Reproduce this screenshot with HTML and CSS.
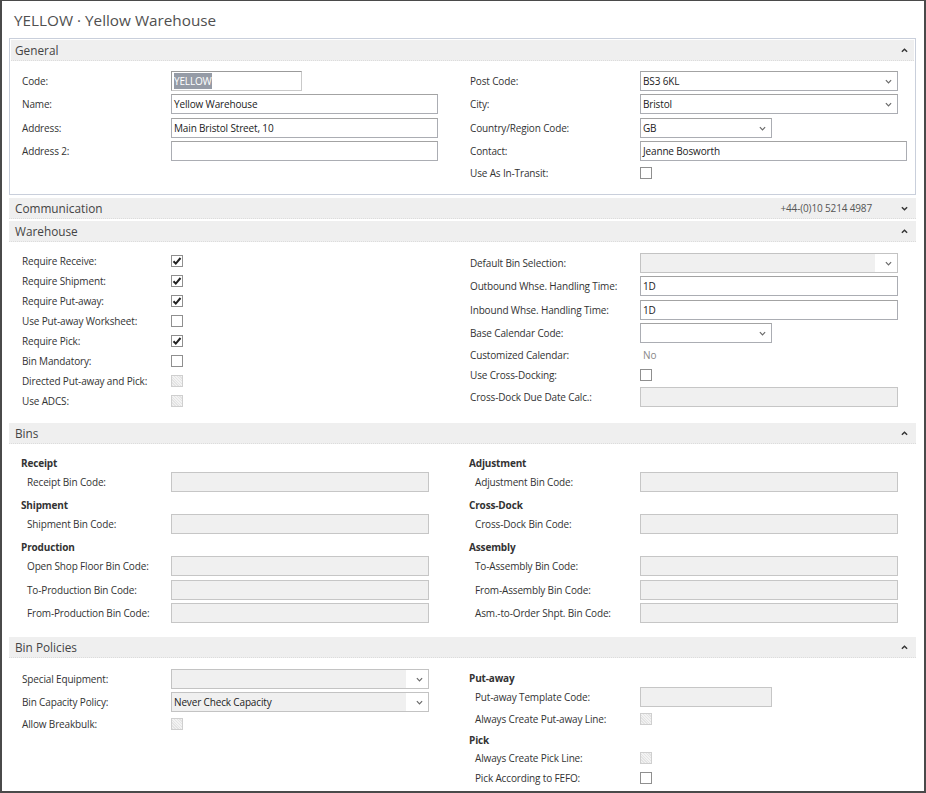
FILE: index.html
```html
<!DOCTYPE html>
<html>
<head>
<meta charset="utf-8">
<link rel="stylesheet" href="styles.css">
</head>
<body>
<div class="window">
  <h1 class="title">YELLOW · Yellow Warehouse</h1>
  <div class="tabs">

    <section class="tab boxed">
      <div class="tab-head"><span class="tab-name">General</span><svg class="chev" viewBox="0 0 8 5"><polyline points="1,4 4,1 7,4"/></svg></div>
      <div class="tab-body">
        <div class="col left">
          <div class="row"><span class="lbl">Code:</span><div class="field w131 code"><span class="sel">YELLOW</span></div></div>
          <div class="row"><span class="lbl">Name:</span><div class="field w267">Yellow Warehouse</div></div>
          <div class="row"><span class="lbl">Address:</span><div class="field w267">Main Bristol Street, 10</div></div>
          <div class="row"><span class="lbl">Address 2:</span><div class="field w267"></div></div>
        </div>
        <div class="col right">
          <div class="row"><span class="lbl">Post Code:</span><div class="field w258 dd">BS3 6KL<svg class="ddc" viewBox="0 0 8 5"><polyline points="1,1 4,4 7,1"/></svg></div></div>
          <div class="row"><span class="lbl">City:</span><div class="field w258 dd">Bristol<svg class="ddc" viewBox="0 0 8 5"><polyline points="1,1 4,4 7,1"/></svg></div></div>
          <div class="row"><span class="lbl">Country/Region Code:</span><div class="field w132 dd">GB<svg class="ddc" viewBox="0 0 8 5"><polyline points="1,1 4,4 7,1"/></svg></div></div>
          <div class="row"><span class="lbl">Contact:</span><div class="field w267">Jeanne Bosworth</div></div>
          <div class="row cbrow"><span class="lbl">Use As In-Transit:</span><span class="cb"></span></div>
        </div>
      </div>
    </section>

    <section class="tab collapsed">
      <div class="tab-head"><span class="tab-name">Communication</span><span class="summary">+44-(0)10 5214 4987</span><svg class="chev" viewBox="0 0 8 5"><polyline points="1,1 4,4 7,1"/></svg></div>
    </section>

    <section class="tab">
      <div class="tab-head"><span class="tab-name">Warehouse</span><svg class="chev" viewBox="0 0 8 5"><polyline points="1,4 4,1 7,4"/></svg></div>
      <div class="tab-body">
        <div class="col left">
          <div class="row cbrow"><span class="lbl">Require Receive:</span><span class="cb on"><svg viewBox="0 0 10 10"><path d="M1.5 5.2 L3.8 7.6 L8.5 2"/></svg></span></div>
          <div class="row cbrow"><span class="lbl">Require Shipment:</span><span class="cb on"><svg viewBox="0 0 10 10"><path d="M1.5 5.2 L3.8 7.6 L8.5 2"/></svg></span></div>
          <div class="row cbrow"><span class="lbl">Require Put-away:</span><span class="cb on"><svg viewBox="0 0 10 10"><path d="M1.5 5.2 L3.8 7.6 L8.5 2"/></svg></span></div>
          <div class="row cbrow"><span class="lbl">Use Put-away Worksheet:</span><span class="cb"></span></div>
          <div class="row cbrow"><span class="lbl">Require Pick:</span><span class="cb on"><svg viewBox="0 0 10 10"><path d="M1.5 5.2 L3.8 7.6 L8.5 2"/></svg></span></div>
          <div class="row cbrow"><span class="lbl">Bin Mandatory:</span><span class="cb"></span></div>
          <div class="row cbrow"><span class="lbl">Directed Put-away and Pick:</span><span class="cb off"></span></div>
          <div class="row cbrow"><span class="lbl">Use ADCS:</span><span class="cb off"></span></div>
        </div>
        <div class="col right">
          <div class="row"><span class="lbl">Default Bin Selection:</span><div class="field w258 dd grey">&nbsp;<svg class="ddc" viewBox="0 0 8 5"><polyline points="1,1 4,4 7,1"/></svg></div></div>
          <div class="row"><span class="lbl">Outbound Whse. Handling Time:</span><div class="field w258">1D</div></div>
          <div class="row"><span class="lbl">Inbound Whse. Handling Time:</span><div class="field w258">1D</div></div>
          <div class="row"><span class="lbl">Base Calendar Code:</span><div class="field w132 dd">&nbsp;<svg class="ddc" viewBox="0 0 8 5"><polyline points="1,1 4,4 7,1"/></svg></div></div>
          <div class="row cbrow"><span class="lbl">Customized Calendar:</span><span class="ro">No</span></div>
          <div class="row cbrow"><span class="lbl">Use Cross-Docking:</span><span class="cb"></span></div>
          <div class="row"><span class="lbl">Cross-Dock Due Date Calc.:</span><div class="field w258 disabled"></div></div>
        </div>
      </div>
    </section>

    <section class="tab grouped">
      <div class="tab-head"><span class="tab-name">Bins</span><svg class="chev" viewBox="0 0 8 5"><polyline points="1,4 4,1 7,4"/></svg></div>
      <div class="tab-body">
        <div class="col left">
          <div class="group">Receipt</div>
          <div class="row sub"><span class="lbl">Receipt Bin Code:</span><div class="field w258 disabled"></div></div>
          <div class="group">Shipment</div>
          <div class="row sub"><span class="lbl">Shipment Bin Code:</span><div class="field w258 disabled"></div></div>
          <div class="group">Production</div>
          <div class="row sub"><span class="lbl">Open Shop Floor Bin Code:</span><div class="field w258 disabled"></div></div>
          <div class="row sub"><span class="lbl">To-Production Bin Code:</span><div class="field w258 disabled"></div></div>
          <div class="row sub"><span class="lbl">From-Production Bin Code:</span><div class="field w258 disabled"></div></div>
        </div>
        <div class="col right">
          <div class="group">Adjustment</div>
          <div class="row sub"><span class="lbl">Adjustment Bin Code:</span><div class="field w258 disabled"></div></div>
          <div class="group">Cross-Dock</div>
          <div class="row sub"><span class="lbl">Cross-Dock Bin Code:</span><div class="field w258 disabled"></div></div>
          <div class="group">Assembly</div>
          <div class="row sub"><span class="lbl">To-Assembly Bin Code:</span><div class="field w258 disabled"></div></div>
          <div class="row sub"><span class="lbl">From-Assembly Bin Code:</span><div class="field w258 disabled"></div></div>
          <div class="row sub"><span class="lbl">Asm.-to-Order Shpt. Bin Code:</span><div class="field w258 disabled"></div></div>
        </div>
      </div>
    </section>

    <section class="tab">
      <div class="tab-head"><span class="tab-name">Bin Policies</span><svg class="chev" viewBox="0 0 8 5"><polyline points="1,4 4,1 7,4"/></svg></div>
      <div class="tab-body">
        <div class="col left">
          <div class="row"><span class="lbl">Special Equipment:</span><div class="field w258 dd grey">&nbsp;<svg class="ddc" viewBox="0 0 8 5"><polyline points="1,1 4,4 7,1"/></svg></div></div>
          <div class="row"><span class="lbl">Bin Capacity Policy:</span><div class="field w258 dd grey">Never Check Capacity<svg class="ddc" viewBox="0 0 8 5"><polyline points="1,1 4,4 7,1"/></svg></div></div>
          <div class="row cbrow"><span class="lbl">Allow Breakbulk:</span><span class="cb off"></span></div>
        </div>
        <div class="col right">
          <div class="group">Put-away</div>
          <div class="row sub"><span class="lbl">Put-away Template Code:</span><div class="field w132 disabled"></div></div>
          <div class="row sub cbrow"><span class="lbl">Always Create Put-away Line:</span><span class="cb off"></span></div>
          <div class="group">Pick</div>
          <div class="row sub cbrow"><span class="lbl">Always Create Pick Line:</span><span class="cb off"></span></div>
          <div class="row sub cbrow"><span class="lbl">Pick According to FEFO:</span><span class="cb"></span></div>
        </div>
      </div>
    </section>

  </div>
</div>
</body>
</html>
```
FILE: styles.css
```css
* { box-sizing: border-box; }
html, body { margin: 0; padding: 0; background: #fff; }
body {
  font-family: "Open Sans", "Noto Sans", sans-serif;
  font-size: 10px;
  letter-spacing: -0.15px;
  color: #333;
}
.window {
  width: 926px;
  height: 793px;
  border-top: 1px solid #4a4a4a;
  border-left: 2px solid #4a4a4a;
  border-right: 2px solid #4a4a4a;
  border-bottom: 2px solid #4a4a4a;
  overflow: hidden;
}
.title {
  margin: 0;
  height: 37px;
  padding: 8px 0 0 12px;
  font-size: 15.3px;
  font-weight: normal;
  letter-spacing: 0;
  color: #505050;
  line-height: 22px;
}
.tabs {
  margin: 0 8px 0 7px;
  display: flex;
  flex-direction: column;
}
.tab.boxed {
  border: 1px solid #c9cfdb;
  padding: 1px;
  margin-bottom: 3px;
}
.tab.collapsed { margin-bottom: 2px; }
.tab-head {
  height: 21px;
  background: #efefef;
  border-bottom: 1px dotted #dcdcdc;
  display: flex;
  align-items: center;
  padding: 0 8px 0 6px;
  color: #444;
  font-size: 11.8px;
  letter-spacing: 0;
}
.boxed .tab-head { padding-left: 4px; padding-right: 6px; }
.tab-name { flex: 1; }
.summary {
  font-size: 10px;
  letter-spacing: -0.15px;
  color: #555;
  margin-right: 29px;
}
.chev {
  width: 7px;
  height: 5px;
  fill: none;
  stroke: #333;
  stroke-width: 1.6;
}
.tab-body {
  display: grid;
  grid-template-columns: 448px 1fr;
  padding: 9px 0 12px 13px;
}
.grouped .tab-body { padding-top: 8px; }
.boxed .tab-body { padding: 8px 0 10px 11px; }
.col { display: flex; flex-direction: column; }
.row {
  height: 23.5px;
  display: flex;
  align-items: center;
}
.row.cbrow { height: 20px; }
.lbl {
  flex: none;
  white-space: nowrap;
}
.left .lbl { width: 149px; }
.right .lbl { width: 170px; }
.row.sub .lbl { padding-left: 5px; }
.group {
  margin-top: 4px;
  height: 14.5px;
  line-height: 14.5px;
  font-weight: bold;
  color: #333;
  margin-left: -1px;
}
.field {
  position: relative;
  height: 20px;
  border: 1px solid #abadb3;
  border-top-color: #a3a3a3;
  background: #fff;
  color: #222;
  padding: 0 2px;
  line-height: 18px;
  white-space: nowrap;
  overflow: hidden;
}
.w131 { width: 131px; }
.w132 { width: 132px; }
.w258 { width: 258px; }
.w267 { width: 267px; }
.field.code { border-color: #9b9b9b #c9c9c9 #c9c9c9 #9b9b9b; }
.sel {
  background: #959ba6;
  color: #fff;
  padding: 1px 0;
}
.field.disabled {
  background: #f0f0f0;
  border-color: #c6c6c6;
}
.field.dd { padding-right: 20px; }
.field.grey {
  background: linear-gradient(to right, #f0f0f0 calc(100% - 22px), #fff calc(100% - 22px));
  border-color: #c3c3c3;
}
.ddc {
  position: absolute;
  right: 5px;
  top: 7px;
  width: 7px;
  height: 5px;
  fill: none;
  stroke: #6b6b6b;
  stroke-width: 1.4;
}
.cb {
  width: 12px;
  height: 12px;
  border: 1px solid #8f8f8f;
  background: #fff;
  display: flex;
  align-items: center;
  justify-content: center;
}
.cb svg {
  width: 10px;
  height: 10px;
  fill: none;
  stroke: #222;
  stroke-width: 2;
}
.cb.off {
  border-color: #cfcfcf;
  background: repeating-linear-gradient(45deg, #e4e4e4 0 1px, #f3f3f3 1px 2px);
}
.ro { color: #888; padding-left: 3px; }
```
